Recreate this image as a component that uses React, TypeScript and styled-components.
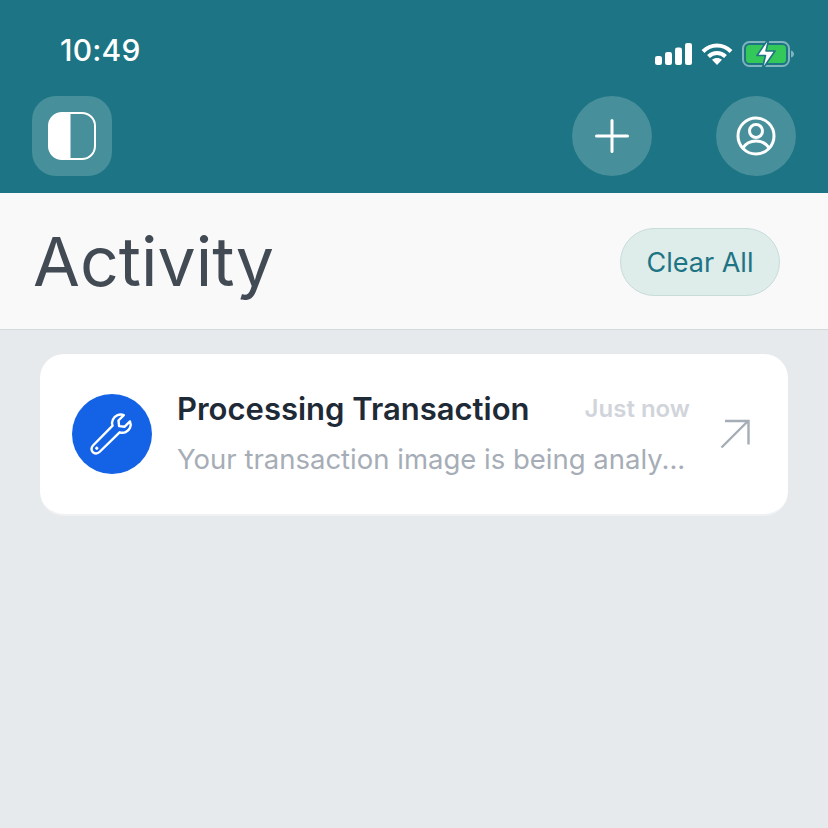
import React from "react";
import styled, { createGlobalStyle } from "styled-components";

const Global = createGlobalStyle`
  html, body { margin: 0; padding: 0; background: #e6eaed; }
  body { font-family: Inter, "Liberation Sans", sans-serif; }
  * { box-sizing: border-box; }
`;

const Page = styled.div`
  width: 828px;
  height: 828px;
  display: flex;
  flex-direction: column;
  background: #e6eaed;
  overflow: hidden;
`;

const Header = styled.header`
  height: 193px;
  background: #1c7484;
  display: flex;
  flex-direction: column;
`;

const StatusBar = styled.div`
  height: 96px;
  padding: 0 34px 0 60px;
  display: flex;
  align-items: flex-start;
  justify-content: space-between;
`;

const Time = styled.span`
  margin-top: 31px;
  font-size: 30px;
  line-height: 38px;
  font-weight: 500;
  color: #fff;
  letter-spacing: 0.2px;
`;

const StatusIcons = styled.div`
  margin-top: 37px;
  display: flex;
  align-items: center;
  gap: 9px;
`;

const NavBar = styled.div`
  padding: 0 32px;
  display: flex;
  align-items: center;
  justify-content: space-between;
`;

const NavRight = styled.div`
  display: flex;
  gap: 64px;
`;

const IconButton = styled.button<{ $round?: boolean }>`
  width: 80px;
  height: 80px;
  padding: 0;
  border: none;
  border-radius: ${(p) => (p.$round ? "50%" : "24px")};
  background: #468f9b;
  display: flex;
  align-items: center;
  justify-content: center;
`;

const TitleBar = styled.div`
  height: 137px;
  padding: 0 48px 0 33px;
  background: #f9f9fa;
  border-bottom: 1px solid #d4d9dc;
  display: flex;
  align-items: center;
  justify-content: space-between;
`;

const Title = styled.h1`
  margin: 0;
  font-size: 68px;
  line-height: 80px;
  font-weight: 400;
  color: #424b54;
`;

const ClearButton = styled.button`
  width: 160px;
  height: 68px;
  padding: 0;
  margin-top: 2px;
  border: 1px solid #c8dcda;
  border-radius: 34px;
  background: #deecea;
  color: #1c7484;
  font-family: inherit;
  font-size: 27px;
  font-weight: 400;
`;

const List = styled.main`
  padding: 24px 40px;
`;

const Card = styled.article`
  height: 162px;
  padding: 0 38px 0 32px;
  background: #fff;
  border-radius: 24px;
  border-bottom: 2px solid #eff1f3;
  display: flex;
  align-items: center;
`;

const Badge = styled.div`
  width: 80px;
  height: 80px;
  flex: none;
  border-radius: 50%;
  background: #1463e6;
  display: flex;
  align-items: center;
  justify-content: center;
`;

const CardBody = styled.div`
  width: 513px;
  margin-left: 25px;
  display: flex;
  flex-direction: column;
  gap: 12px;
`;

const CardTop = styled.div`
  display: flex;
  align-items: center;
  justify-content: space-between;
`;

const CardTitle = styled.span`
  font-size: 31px;
  line-height: 38px;
  font-weight: 600;
  color: #1f2a37;
`;

const When = styled.span`
  font-size: 24px;
  line-height: 38px;
  font-weight: 600;
  color: #d1d5db;
`;

const Message = styled.span`
  font-size: 27.5px;
  line-height: 38px;
  font-weight: 400;
  color: #a6adb6;
  white-space: nowrap;
`;

const Arrow = styled.div`
  margin-left: auto;
  display: flex;
`;

export default function App() {
  return (
    <Page>
      <Global />
      <Header>
        <StatusBar>
          <Time>10:49</Time>
          <StatusIcons>
            <svg width="38" height="24" viewBox="0 0 38 24" fill="#fff">
              <rect x="1" y="14" width="7" height="9" rx="2.2" />
              <rect x="11" y="10" width="7" height="13" rx="2.2" />
              <rect x="21" y="5.5" width="7" height="17.5" rx="2.2" />
              <rect x="31" y="1" width="7" height="22" rx="2.2" />
            </svg>
            <svg width="32" height="24" viewBox="0 0 32 24" fill="none" stroke="#fff" strokeWidth="4">
              <path d="M2 9.5C10 1.5 22 1.5 30 9.5" />
              <path d="M7.5 14.5C12.5 9.8 19.5 9.8 24.5 14.5" />
              <path d="M16 23l-5-5.2c2.8-2.4 7.2-2.4 10 0z" fill="#fff" stroke="none" />
            </svg>
            <svg width="52" height="34" viewBox="0 0 52 34" fill="none">
              <rect x="1" y="5" width="46" height="24" rx="6.5" stroke="#7fb4bd" strokeWidth="2" />
              <rect x="4" y="8" width="40" height="18" rx="3.5" fill="#34c759" />
              <path d="M49 13.5c2 .6 3 2 3 3.5s-1 3-3 3.5z" fill="#7fb4bd" />
              <path d="M27 1L15 18.5h8.5L20 33l13-19h-9z" fill="#fff" stroke="#1c7484" strokeWidth="1.6" strokeLinejoin="round" />
            </svg>
          </StatusIcons>
        </StatusBar>
        <NavBar>
          <IconButton aria-label="Toggle">
            <svg width="48" height="48" viewBox="0 0 48 48" fill="none">
              <rect x="1" y="1" width="46" height="46" rx="13" stroke="#fff" strokeWidth="2" />
              <path d="M22 1H14A13 13 0 0 0 1 14v20a13 13 0 0 0 13 13h8z" fill="#fff" stroke="#fff" strokeWidth="1" />
            </svg>
          </IconButton>
          <NavRight>
            <IconButton $round aria-label="Add">
              <svg width="34" height="34" viewBox="0 0 34 34" stroke="#fff" strokeWidth="3" strokeLinecap="round">
                <path d="M17 1.5v31M1.5 17h31" />
              </svg>
            </IconButton>
            <IconButton $round aria-label="Profile">
              <svg width="40" height="40" viewBox="0 0 40 40" fill="none" stroke="#fff" strokeWidth="3">
                <circle cx="20" cy="20" r="18" />
                <circle cx="20" cy="15" r="6.5" />
                <path d="M7 32c3-5 8-7 13-7s10 2 13 7" />
              </svg>
            </IconButton>
          </NavRight>
        </NavBar>
      </Header>
      <TitleBar>
        <Title>Activity</Title>
        <ClearButton>Clear All</ClearButton>
      </TitleBar>
      <List>
        <Card>
          <Badge>
            <svg width="44" height="44" viewBox="0 0 44 44" fill="none" stroke="#fff" strokeWidth="2.4" strokeLinejoin="round">
              <path d="M27.5 3.2c2-.8 4.4-.8 6.3 0l-5.3 5.3.6 5.6 5.6.6 5.3-5.3c.9 2 .8 4.4 0 6.4-1.7 4-6.4 6-10.4 4.5L9.5 40c-2 1.9-5 1.9-6.7.1-1.8-1.8-1.7-4.7.2-6.6L22.6 13.6c-1.6-4 .8-8.7 4.9-10.4z" />
              <circle cx="6.8" cy="36.2" r="1.2" fill="#fff" strokeWidth="1" />
            </svg>
          </Badge>
          <CardBody>
            <CardTop>
              <CardTitle>Processing Transaction</CardTitle>
              <When>Just now</When>
            </CardTop>
            <Message>Your transaction image is being analy...</Message>
          </CardBody>
          <Arrow>
            <svg width="30" height="30" viewBox="0 0 30 30" fill="none" stroke="#a6adb6" strokeWidth="2.4">
              <path d="M1.5 28.5L28 2M5 2h23.5v23.5" />
            </svg>
          </Arrow>
        </Card>
      </List>
    </Page>
  );
}
